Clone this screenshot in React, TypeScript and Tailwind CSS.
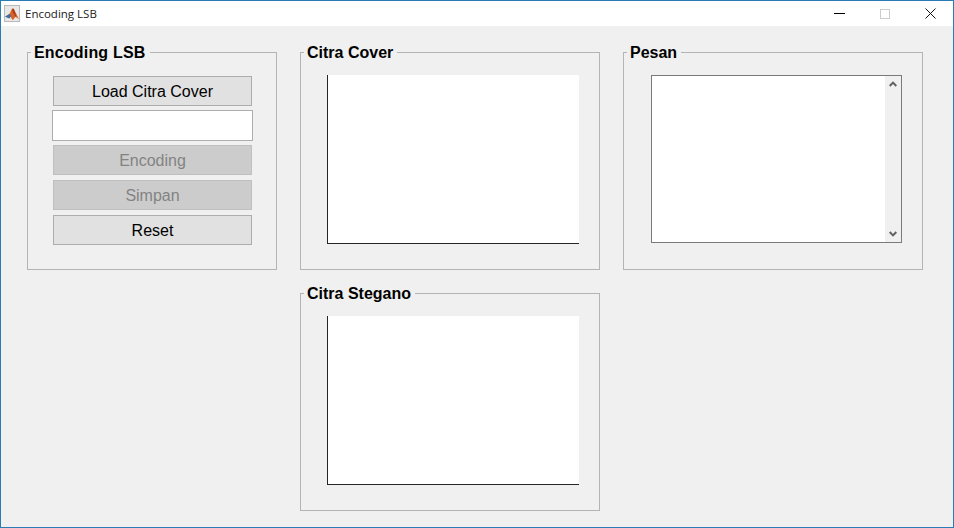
function Panel({ title, titleClass, className, children }: { title: string; titleClass?: string; className?: string; children: React.ReactNode }) {
    return (
        <div className={`relative h-[218px] border border-[#b4b4b4] ${className ?? ''}`}>
            <span className={`absolute left-[3px] top-[-9px] bg-[#f0f0f0] pl-[3px] pr-[4px] text-[16px] font-bold leading-[18px] text-black ${titleClass ?? ''}`}>
                {title}
            </span>
            {children}
        </div>
    );
}

function Button({ label, disabled }: { label: string; disabled?: boolean }) {
    return (
        <div
            className={
                disabled
                    ? 'flex h-[30px] w-[199px] items-center justify-center border border-[#bfbfbf] bg-[#cccccc] pt-[2px] text-[16px] text-[#838383]'
                    : 'flex h-[30px] w-[199px] items-center justify-center border border-[#adadad] bg-[#e1e1e1] pt-[2px] text-[16px] text-black'
            }
        >
            {label}
        </div>
    );
}

function Axes() {
    return (
        <div className="ml-[26px] mt-[22px] h-[169px] w-[252px] border-b border-l border-[#262626] bg-white" />
    );
}

export default function App() {
    return (
        <div className="flex h-[528px] w-[954px] flex-col border border-[#2b7bb5] bg-[#f0f0f0] font-['Liberation_Sans',sans-serif]">
            {/* Title bar */}
            <div className="flex h-[25px] items-center justify-between bg-white">
                <div className="flex items-center">
                    <div className="ml-[3px] flex h-[17px] w-[16px] items-center justify-center border border-[#b9b9b9] bg-[#e8e8e8]">
                        <svg viewBox="0 0 16 16" className="h-[14px] w-[14px]">
                            <path d="M0 11 L5 8 L8 2 L10 2 L16 14 L12 11 L9 15 L6 11 Z" fill="#d9642a" />
                            <path d="M0 11 L5 8 L7 10 L5 13 Z" fill="#3a6ea5" />
                            <path d="M8 2 L10 2 L13 11 L12 11 L9 6 Z" fill="#a83c1c" />
                        </svg>
                    </div>
                    <span className="ml-[5px] font-['Open_Sans',sans-serif] text-[11.5px] text-[#1a1a1a]">Encoding LSB</span>
                </div>
                <div className="mr-[17px] flex items-center gap-[35px]">
                    <div className="h-px w-[11px] bg-black" />
                    <div className="h-[10px] w-[10px] border border-[#cccccc]" />
                    <svg viewBox="0 0 11 11" className="h-[11px] w-[11px]" stroke="#111" strokeWidth="1">
                        <path d="M0.5 0.5 L10.5 10.5 M10.5 0.5 L0.5 10.5" />
                    </svg>
                </div>
            </div>

            {/* Panels */}
            <div className="grid grid-cols-[250px_300px_300px] grid-rows-[218px_218px] gap-[23px] pl-[26px] pt-[26px]">
                <Panel title="Encoding LSB" titleClass="tracking-[0.18px]">
                    <div className="ml-[24px] mt-[23px] flex w-[201px] flex-col items-center">
                        <Button label="Load Citra Cover" />
                        <div className="mb-[4px] mt-[4px] h-[31px] w-[201px] border border-[#adadad] bg-white" />
                        <Button label="Encoding" disabled />
                        <div className="mt-[5px]">
                            <Button label="Simpan" disabled />
                        </div>
                        <div className="mt-[5px]">
                            <Button label="Reset" />
                        </div>
                    </div>
                </Panel>

                <Panel title="Citra Cover">
                    <Axes />
                </Panel>

                <Panel title="Pesan">
                    <div className="ml-[27px] mt-[22px] flex h-[168px] w-[251px] border border-[#7a7a7a] bg-white">
                        <div className="flex-1" />
                        <div className="flex w-[16px] flex-col items-center justify-between bg-[#f0f0f0] py-[5px]">
                            <svg viewBox="0 0 8 6" className="h-[6px] w-[8px]" fill="none" stroke="#606060" strokeWidth="2">
                                <path d="M0.7 5 L4 1.6 L7.3 5" />
                            </svg>
                            <svg viewBox="0 0 8 6" className="h-[6px] w-[8px]" fill="none" stroke="#606060" strokeWidth="2">
                                <path d="M0.7 1 L4 4.4 L7.3 1" />
                            </svg>
                        </div>
                    </div>
                </Panel>

                <Panel title="Citra Stegano" className="col-start-2">
                    <Axes />
                </Panel>
            </div>
        </div>
    );
}
